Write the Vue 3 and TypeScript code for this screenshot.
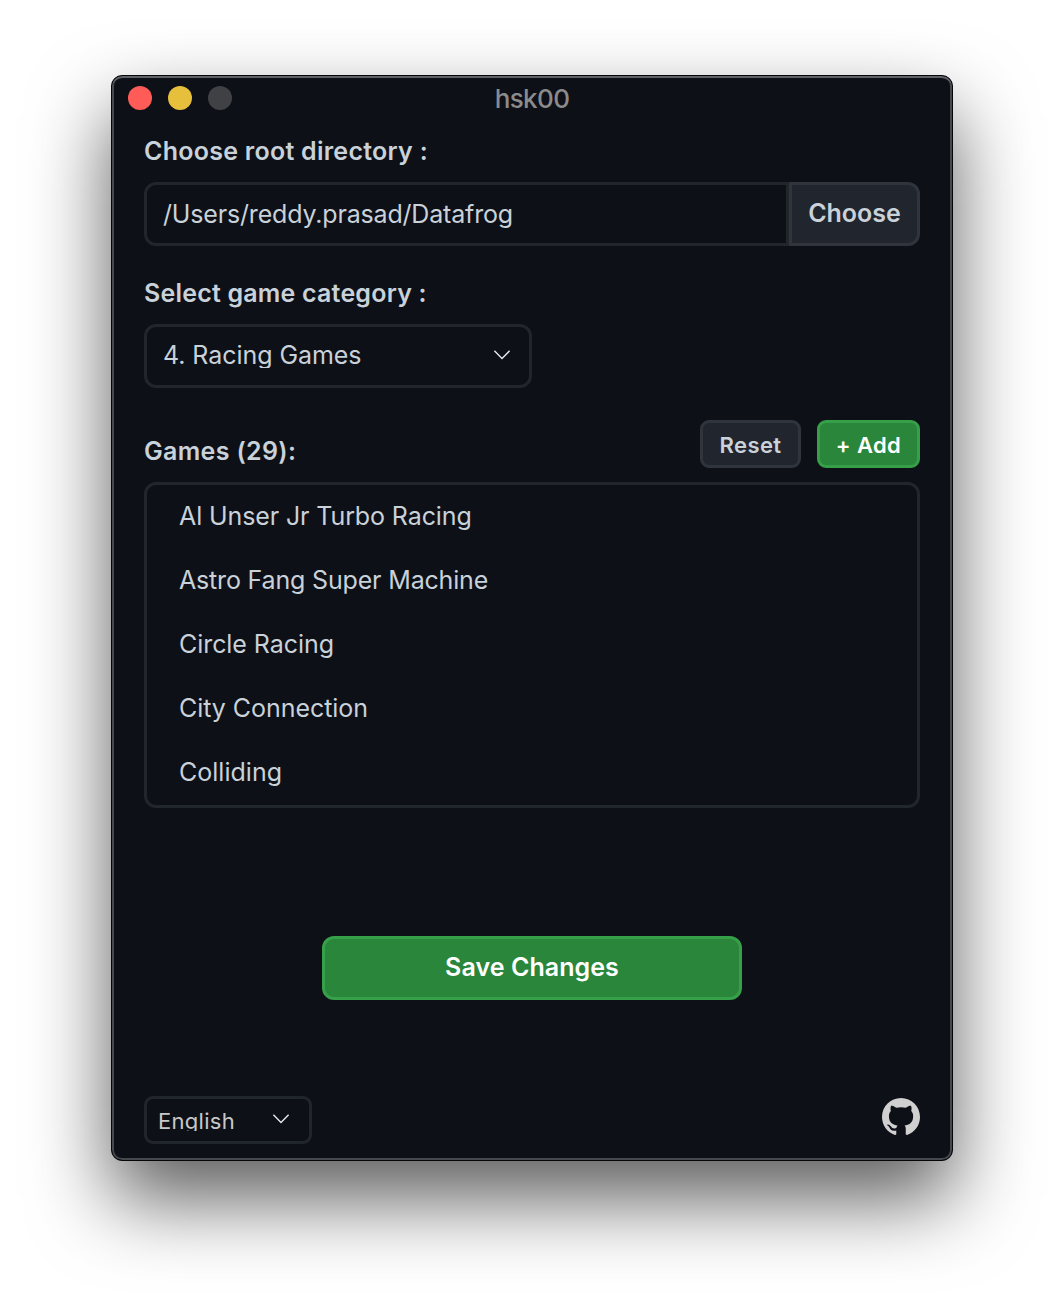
<script setup lang="ts">
import { ref } from 'vue'

interface Game {
  name: string
  spacing: number
}

const rootDir = ref('/Users/reddy.prasad/Datafrog')
const category = ref('4. Racing Games')
const language = ref('English')
const total = ref(29)
const games = ref<Game[]>([
  { name: 'Al Unser Jr Turbo Racing', spacing: -0.11 },
  { name: 'Astro Fang Super Machine', spacing: -0.17 },
  { name: 'Circle Racing', spacing: -0.06 },
  { name: 'City Connection', spacing: -0.05 },
  { name: 'Colliding', spacing: 0.02 },
])
</script>

<template>
  <div class="desktop">
    <div class="window">
      <header class="titlebar">
        <div class="lights">
          <span class="light close"></span>
          <span class="light minimize"></span>
          <span class="light zoom"></span>
        </div>
        <span class="title">hsk00</span>
      </header>

      <main class="content">
        <div class="label root-label">Choose root directory :</div>
        <div class="directory">
          <div class="path"><span>{{ rootDir }}</span></div>
          <button class="btn choose">Choose</button>
        </div>

        <div class="label category-label">Select game category :</div>
        <div class="select category">
          <span class="value">{{ category }}</span>
          <svg width="18" height="12" viewBox="0 0 18 12" fill="none" stroke="#e6e8ea" stroke-width="1.4">
            <path d="M1.4 1.8 9 9.4l7.6-7.6" />
          </svg>
        </div>

        <div class="games-head">
          <div class="label games-label">Games ({{ total }}):</div>
          <div class="actions">
            <button class="btn small reset">Reset</button>
            <button class="btn small primary add">+ Add</button>
          </div>
        </div>
        <ul class="games">
          <li v-for="game in games" :key="game.name" :style="{ letterSpacing: game.spacing + 'px' }">{{ game.name }}</li>
        </ul>

        <button class="btn primary save">Save Changes</button>

        <footer class="footer">
          <div class="select language">
            <span class="value">{{ language }}</span>
            <svg width="18" height="12" viewBox="0 0 18 12" fill="none" stroke="#e6e8ea" stroke-width="1.4">
              <path d="M1.4 1.8 9 9.4l7.6-7.6" />
            </svg>
          </div>
          <svg class="github" width="38" height="38" viewBox="0 0 16 16" fill="#d0d0d0">
            <path fill-rule="evenodd" d="M8 0C3.58 0 0 3.58 0 8c0 3.54 2.29 6.53 5.47 7.59.4.07.55-.17.55-.38 0-.19-.01-.82-.01-1.49-2.01.37-2.53-.49-2.69-.94-.09-.23-.48-.94-.82-1.13-.28-.15-.68-.52-.01-.53.63-.01 1.08.58 1.23.82.72 1.21 1.87.87 2.33.66.07-.52.28-.87.51-1.07-1.78-.2-3.64-.89-3.64-3.95 0-.87.31-1.59.82-2.15-.08-.2-.36-1.02.08-2.12 0 0 .67-.21 2.2.82.64-.18 1.32-.27 2-.27.68 0 1.36.09 2 .27 1.53-1.04 2.2-.82 2.2-.82.44 1.1.16 1.92.08 2.12.51.56.82 1.27.82 2.15 0 3.07-1.87 3.75-3.65 3.95.29.25.54.73.54 1.48 0 1.07-.01 1.93-.01 2.2 0 .21.15.46.55.38A8.013 8.013 0 0 0 16 8c0-4.42-3.58-8-8-8z" />
          </svg>
        </footer>
      </main>
    </div>
  </div>
</template>

<style>
html,
body {
  background: #fff;
}
</style>

<style scoped>
* {
  box-sizing: border-box;
}

.desktop {
  width: 1064px;
  height: 1308px;
  padding: 75px 111px 0;
  overflow: hidden;
  font: 400 25px/32px Inter, 'Noto Sans', sans-serif;
  color: #c9d1d9;
}

.window {
  width: 842px;
  height: 1086px;
  border: 1px solid #050608;
  border-radius: 11px;
  background: #0d1017;
  box-shadow:
    inset 0 2px 0 #5f6266,
    inset 0 0 0 2px #45484c,
    0 38px 80px rgba(0, 0, 0, 0.64);
}

.titlebar {
  display: grid;
  grid-template-columns: 1fr auto 1fr;
  align-items: center;
  height: 44px;
  padding: 0 16px;
}

.lights {
  display: flex;
  gap: 16px;
}

.light {
  width: 24px;
  height: 24px;
  border-radius: 50%;
}

.close {
  background: #ff5c57;
}

.minimize {
  background: #e6bf3c;
}

.zoom {
  background: #3f4145;
}

.title {
  font-size: 26px;
  font-weight: 500;
  letter-spacing: -0.6px;
  color: #8b8b8c;
  padding-top: 2px;
}

.content {
  display: flex;
  flex-direction: column;
  padding: 15px 32px 0;
}

.label {
  height: 32px;
  font-weight: 600;
  white-space: nowrap;
}

.root-label {
  letter-spacing: 0.26px;
}

.directory {
  display: flex;
  height: 64px;
  margin-top: 15px;
}

.path {
  flex: 1;
  border: 3px solid #21252c;
  border-radius: 12px 0 0 12px;
  padding: 13px 16px;
  letter-spacing: -0.17px;
}

.btn {
  margin: 0;
  padding: 0;
  font: 600 25px/32px Inter, 'Noto Sans', sans-serif;
  color: #c9d1d9;
  background: #21252d;
  border: 3px solid #30343c;
}

.choose {
  width: 131px;
  padding-bottom: 3px;
  border-radius: 0 12px 12px 0;
  letter-spacing: 0;
}

.category-label {
  margin-top: 31px;
  letter-spacing: 0.2px;
}

.select {
  display: flex;
  align-items: flex-start;
  justify-content: space-between;
  border: 3px solid #21252c;
}

.value {
  overflow: hidden;
}

.category {
  width: 388px;
  height: 64px;
  margin-top: 15px;
  padding: 12px 18px 0 16px;
  border-radius: 12px;
  letter-spacing: -0.06px;
}

.category .value {
  height: 29px;
  line-height: 32px;
}

.category svg {
  margin-top: 10px;
}

.games-head {
  display: flex;
  justify-content: space-between;
  height: 48px;
  margin-top: 32px;
}

.games-label {
  margin-top: 15px;
  letter-spacing: 0.34px;
}

.actions {
  display: flex;
  gap: 16px;
}

.small {
  height: 48px;
  padding-top: 1px;
  font-size: 22px;
  border-radius: 9px;
}

.reset {
  width: 101px;
  letter-spacing: 0.4px;
}

.add {
  width: 103px;
  letter-spacing: 0.4px;
}

.primary {
  color: #fff;
  background: #29863a;
  border-color: #36a048;
}

.games {
  height: 326px;
  margin: 14px 0 0;
  padding: 0;
  list-style: none;
  border: 3px solid #21252c;
  border-radius: 12px;
  overflow: hidden;
}

.games li {
  height: 64px;
  padding: 15px 32px;
  white-space: nowrap;
}

.save {
  align-self: center;
  width: 420px;
  height: 64px;
  margin-top: 128px;
  padding-bottom: 3px;
  border-radius: 12px;
  letter-spacing: 0.07px;
}

.footer {
  display: flex;
  justify-content: space-between;
  align-items: flex-start;
  height: 48px;
  margin-top: 96px;
}

.language {
  width: 168px;
  height: 48px;
  padding: 6px 19px 0 11px;
  border-radius: 9px;
  font-size: 22px;
  letter-spacing: 0.28px;
  color: #c8c8c8;
}

.language .value {
  height: 26px;
  line-height: 32px;
}

.language svg {
  margin-top: 8px;
}

.github {
  margin-top: 2px;
}
</style>
